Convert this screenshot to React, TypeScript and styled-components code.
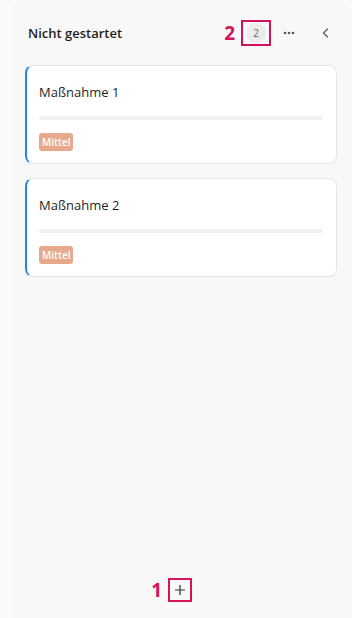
import styled, { createGlobalStyle } from 'styled-components';

const GlobalStyle = createGlobalStyle`
    html, body {
        margin: 0;
        padding: 0;
        background: #fafafa;
        font-family: 'Open Sans', 'Noto Sans', sans-serif;
    }
`;

const tasks = [
    { id: 1, name: 'Maßnahme 1', priority: 'Mittel' },
    { id: 2, name: 'Maßnahme 2', priority: 'Mittel' },
];

export default function App() {
    return (
        <>
            <GlobalStyle />
            <Page>
                <Column>
                    <Header>
                        <Title>Nicht gestartet</Title>
                        <Actions>
                            <Highlight $w={30} $h={26}>
                                <Marker>2</Marker>
                                <Count>2</Count>
                            </Highlight>
                            <IconButton aria-label='Mehr' $gap={6}>
                                <svg width='14' height='14' viewBox='0 0 14 14'>
                                    <circle cx='3' cy='7' r='1.3' fill='#555' />
                                    <circle cx='7' cy='7' r='1.3' fill='#555' />
                                    <circle cx='11' cy='7' r='1.3' fill='#555' />
                                </svg>
                            </IconButton>
                            <IconButton aria-label='Einklappen' $gap={13}>
                                <svg width='14' height='14' viewBox='0 0 14 14'>
                                    <path d='M8.5 3 L4.5 7 L8.5 11' fill='none' stroke='#666' strokeWidth='1.5' strokeLinecap='round' strokeLinejoin='round' />
                                </svg>
                            </IconButton>
                        </Actions>
                    </Header>

                    <CardList>
                        {tasks.map((task) => (
                            <Card key={task.id}>
                                <CardTitle>{task.name}</CardTitle>
                                <Progress />
                                <Badge>{task.priority}</Badge>
                            </Card>
                        ))}
                    </CardList>

                    <Footer>
                        <Highlight $w={24} $h={24}>
                            <Marker>1</Marker>
                            <AddButton aria-label='Hinzufügen'>
                                <svg width='12' height='12' viewBox='0 0 12 12'>
                                    <path d='M6 1 V11 M1 6 H11' stroke='#333' strokeWidth='1.2' />
                                </svg>
                            </AddButton>
                        </Highlight>
                    </Footer>
                </Column>
            </Page>
        </>
    );
}

const Page = styled.div`
    display: flex;
    height: 100vh;
    box-sizing: border-box;
    padding: 4px 4px 0 11px;
`;

const Column = styled.div`
    flex: 1;
    display: flex;
    flex-direction: column;
    background: #f8f8f8;
    border-left: 1px solid #ffffff;
`;

const Header = styled.div`
    display: flex;
    align-items: center;
    justify-content: space-between;
    height: 26px;
    padding: 16px 10px 19px 16px;
`;

const Title = styled.h2`
    margin: 0;
    font-size: 13px;
    font-weight: 600;
    color: #1f1f1f;
`;

const Actions = styled.div`
    display: flex;
    align-items: center;
`;

// red annotation frame around a control, with its number on the left
const Highlight = styled.div<{ $w: number; $h: number }>`
    position: relative;
    display: flex;
    align-items: center;
    justify-content: center;
    width: ${(p) => p.$w}px;
    height: ${(p) => p.$h}px;
    box-sizing: border-box;
    border: 2px solid #d3145a;
`;

const Marker = styled.span`
    position: absolute;
    right: 100%;
    margin-right: 8px;
    font-size: 19px;
    font-weight: 700;
    color: #d3145a;
    line-height: 1;
`;

const Count = styled.span`
    display: flex;
    align-items: center;
    justify-content: center;
    width: 20px;
    height: 20px;
    border-radius: 50%;
    background: #ececec;
    color: #666;
    font-size: 10px;
`;

const IconButton = styled.button<{ $gap: number }>`
    display: flex;
    align-items: center;
    justify-content: center;
    width: 24px;
    height: 24px;
    padding: 0;
    margin-left: ${(p) => p.$gap}px;
    border: none;
    background: transparent;
`;

const CardList = styled.div`
    display: flex;
    flex-direction: column;
    gap: 14px;
    padding: 0 11px 0 13px;
`;

const Card = styled.div`
    display: flex;
    flex-direction: column;
    align-items: flex-start;
    height: 99px;
    box-sizing: border-box;
    padding: 17px 13px 0 12px;
    background: #ffffff;
    border: 1px solid #e4e4e4;
    border-left: 2px solid #1e88e5;
    border-radius: 8px;
`;

const CardTitle = styled.div`
    font-size: 13px;
    color: #1f1f1f;
    line-height: 18px;
`;

const Progress = styled.div`
    align-self: stretch;
    height: 4px;
    margin-top: 15px;
    border-radius: 2px;
    background: #f0f0f0;
`;

const Badge = styled.span`
    margin-top: 13px;
    padding: 0 3px;
    height: 18px;
    line-height: 18px;
    border-radius: 3px;
    background: #e6a98b;
    color: #ffffff;
    font-size: 10px;
    font-weight: 600;
`;

const Footer = styled.div`
    margin-top: auto;
    display: flex;
    justify-content: center;
    padding-bottom: 16px;
`;

const AddButton = styled.button`
    display: flex;
    align-items: center;
    justify-content: center;
    width: 20px;
    height: 20px;
    padding: 0;
    background: transparent;
    border: none;
`;
